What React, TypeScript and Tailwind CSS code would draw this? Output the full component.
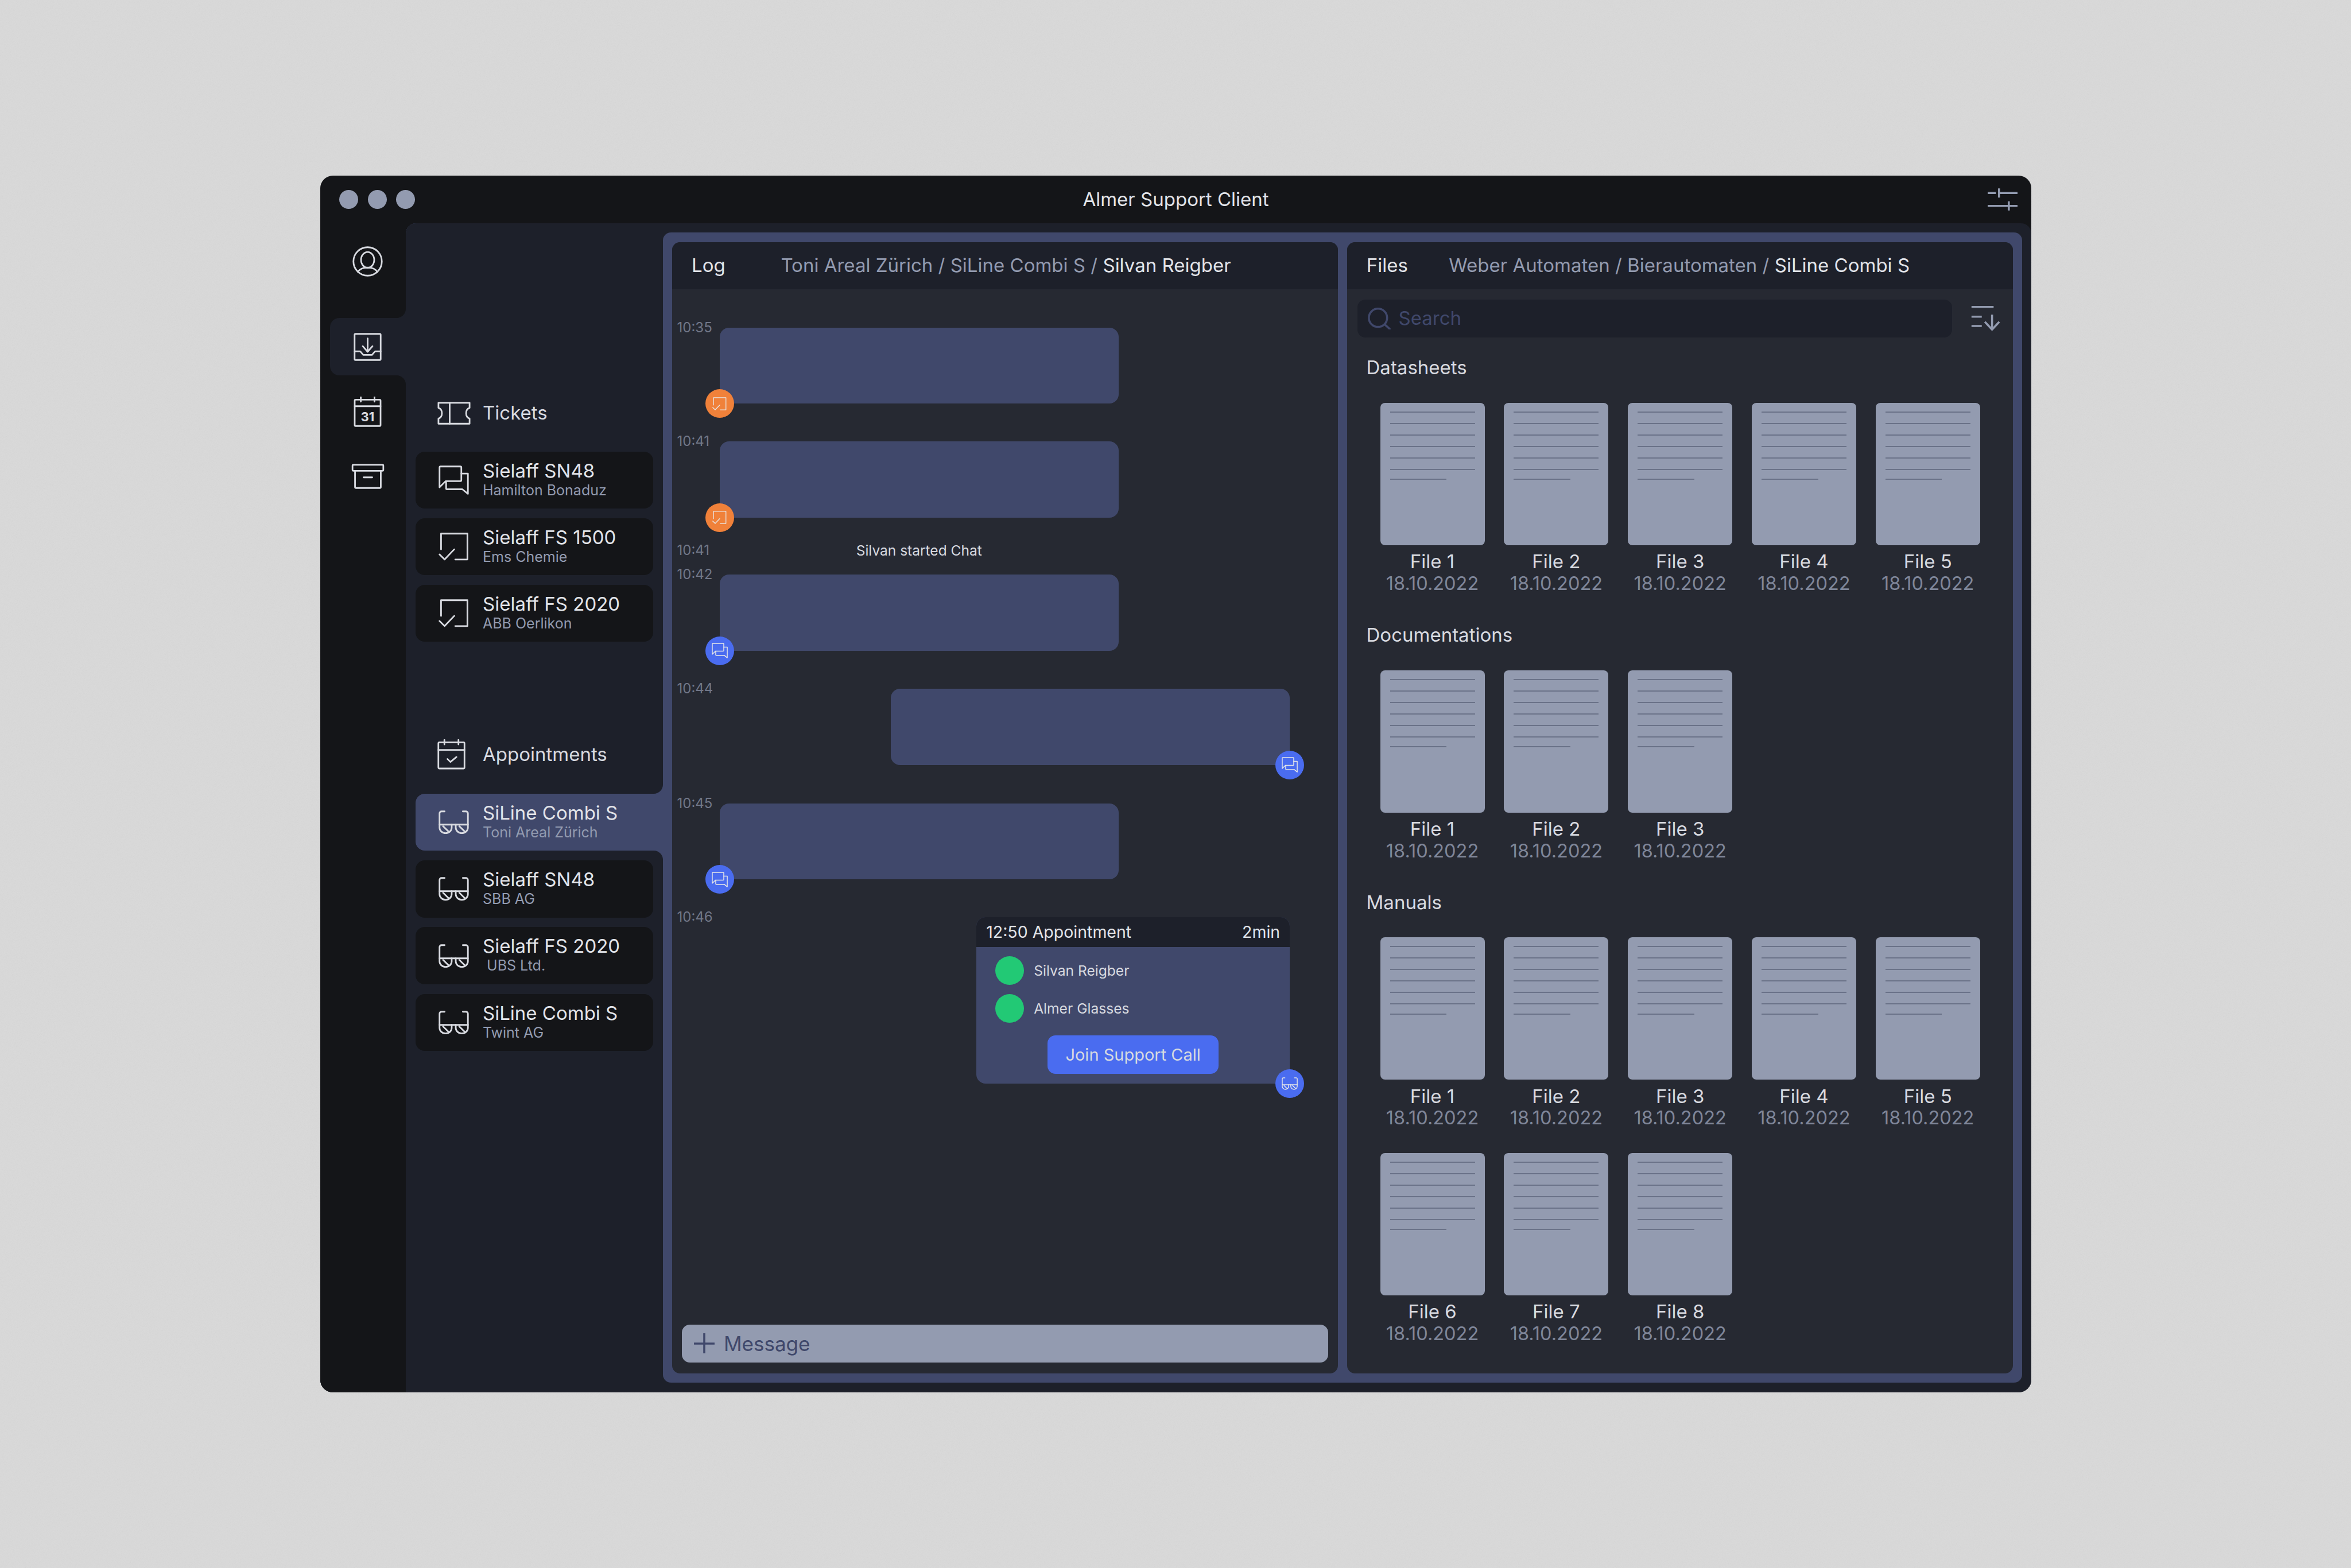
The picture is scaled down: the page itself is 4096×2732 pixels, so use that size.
const light = '#d8dae0'

const Svg = ({ w, h, vb, className = '', children }: { w: number; h: number; vb: string; className?: string; children: React.ReactNode }) => (
  <svg width={w} height={h} viewBox={vb} fill="none" stroke="currentColor" strokeWidth="3.2" strokeLinecap="round" strokeLinejoin="round" className={`block shrink-0 ${className}`} aria-hidden="true">
    {children}
  </svg>
)

const UserIcon = () => (
  <Svg w={53} h={53} vb="0 0 60 60">
    <circle cx="30" cy="30" r="28" />
    <ellipse cx="30" cy="27" rx="13" ry="15.5" />
    <path d="M11 51c3-6 10-9 19-9s16 3 19 9" />
  </Svg>
)

const InboxIcon = () => (
  <Svg w={49} h={49} vb="0 0 55 55">
    <rect x="2" y="2" width="51" height="51" rx="2" />
    <path d="M27.5 11v25M18 26l9.5 11L37 26" />
    <path d="M2 36h11l6 7h17l6-7h11" />
  </Svg>
)

const CalendarIcon = () => (
  <Svg w={49} h={53} vb="0 0 55 60">
    <rect x="2" y="6" width="51" height="52" rx="2" />
    <path d="M2 19h51M14 1v9M41 1v9" />
    <text x="27.5" y="49" textAnchor="middle" fontSize="25" fontWeight="700" fill="currentColor" stroke="none" fontFamily="Inter, sans-serif">31</text>
  </Svg>
)

const ArchiveIcon = () => (
  <Svg w={58} h={44} vb="0 0 65 50">
    <rect x="2" y="2" width="61" height="12" rx="2" />
    <path d="M7 14v32a2 2 0 002 2h47a2 2 0 002-2V14M24 27h17" />
  </Svg>
)

const TicketIcon = () => (
  <Svg w={58} h={40} vb="0 0 65 45">
    <path d="M2 2h61v10c-9 3-9 18 0 21v10H2V33c9-3 9-18 0-21z" />
    <path d="M24 2v41" />
  </Svg>
)

const CalendarCheckIcon = () => (
  <Svg w={49} h={53} vb="0 0 56 60">
    <rect x="2" y="6" width="52" height="52" rx="2" />
    <path d="M2 21h52M14 1v9M42 1v9M20 39l6 6 12-10" />
  </Svg>
)

const ChatIcon = ({ size = 53 }: { size?: number }) => (
  <Svg w={size} h={size * 58 / 60} vb="0 0 60 58">
    <path d="M2 43V4a2 2 0 012-2h39a2 2 0 012 2v25a2 2 0 01-2 2H14z" />
    <path d="M45 16h13v40L47 47H17a2 2 0 01-2-2V31" />
  </Svg>
)

const CheckIcon = ({ size = 53 }: { size?: number }) => (
  <Svg w={size} h={size * 56 / 60} vb="0 0 60 56">
    <path d="M5 33V2h52v51H33" />
    <path d="M2 43l10 10 19-20" />
  </Svg>
)

const GlassesIcon = ({ size = 53 }: { size?: number }) => (
  <Svg w={size} h={size * 47 / 60} vb="0 0 60 47">
    <path d="M12 2H6a4 4 0 00-4 4v22M48 2h6a4 4 0 014 4v22M2 28h56" />
    <path d="M2 28v6a12 11 0 0024 0v-6M34 28v6a12 11 0 0024 0v-6M9 31l11 11M41 31l11 11" />
  </Svg>
)

const SettingsIcon = () => (
  <svg width="52" height="39" viewBox="0 0 58 43" fill="none" stroke="#939bb0" strokeWidth="4" aria-hidden="true" className="block">
    <path d="M0 9h16M22 9h36M22 0v18M0 34h41M41 34h17M41 25v18" />
  </svg>
)

const SortIcon = () => (
  <svg width="52" height="43" viewBox="0 0 58 48" fill="none" stroke="#939bb0" strokeWidth="4" aria-hidden="true" className="block shrink-0">
    <path d="M2 2h43M2 21h20M2 39h20M42 17v29M28 31l14 15 14-15" />
  </svg>
)

const SearchIcon = () => (
  <svg width="40" height="38" viewBox="0 0 45 43" fill="none" stroke="#40486b" strokeWidth="4" strokeLinecap="round" aria-hidden="true" className="block shrink-0">
    <circle cx="20" cy="20" r="18" />
    <path d="M33 33l10 9" />
  </svg>
)

const PlusIcon = () => (
  <svg width="36" height="35" viewBox="0 0 40 39" fill="none" stroke="#40486b" strokeWidth="4" aria-hidden="true" className="block shrink-0">
    <path d="M0 20h40M20 0v39" />
  </svg>
)

const ListCard = ({ icon, title, sub, active = false }: { icon: React.ReactNode; title: string; sub: string; active?: boolean }) => (
  <div className={`flex h-[99.6px] items-start pl-[40px] ${active ? 'rounded-l-[16px] bg-[#40486b]' : 'rounded-[16px] bg-[#141518]'}`}>
    <div className="flex h-full w-[77.5px] shrink-0 items-center text-[#d8dae0]">{icon}</div>
    <div className="pt-[16px]">
      <div className="text-[33px] leading-[34px] text-[#e2e4e9]">{title}</div>
      <div className="mt-[4px] whitespace-pre text-[25px] leading-[26px] text-[#939bb0]">{sub}</div>
    </div>
  </div>
)

const Heading = ({ icon, label, className = '' }: { icon: React.ReactNode; label: string; className?: string }) => (
  <div className={`flex h-[60px] items-center pl-[38px] ${className}`}>
    <div className="flex w-[79.5px] shrink-0 items-center text-[#d8dae0]">{icon}</div>
    <span className="text-[33px] text-[#d8dae0]">{label}</span>
  </div>
)

const Badge = ({ color, side, children }: { color: string; side: 'left' | 'right'; children: React.ReactNode }) => (
  <div className={`absolute bottom-[-25px] flex h-[50px] w-[50px] items-center justify-center rounded-full text-[#e8e8e8] ${color === 'orange' ? 'bg-[#f0813a]' : 'bg-[#4a6cf0]'} ${side === 'left' ? 'left-[-25px]' : 'right-[-25px]'}`}>
    {children}
  </div>
)

const Time = ({ value }: { value: string }) => (
  <div className="w-[74px] shrink-0 text-[24px] leading-[0] text-[#717788]">{value}</div>
)

const Bubble = ({ side, badge }: { side: 'left' | 'right'; badge: React.ReactNode }) => (
  <div className={`relative h-[132.5px] w-[695.4px] rounded-[16px] bg-[#40486b] ${side === 'right' ? 'ml-auto' : ''}`}>
    {badge}
  </div>
)

const Row = ({ time, className = '', children }: { time: string; className?: string; children: React.ReactNode }) => (
  <div className={`flex ${className}`}>
    <Time value={time} />
    {children}
  </div>
)

const Participant = ({ name }: { name: string }) => (
  <div className="flex h-[50px] items-center gap-[17px]">
    <div className="h-[50px] w-[50px] rounded-full bg-[#22c975]" />
    <span className="text-[24.6px] text-[#d8dae0]">{name}</span>
  </div>
)

const LogPanel = () => (
  <section className="flex min-h-0 flex-col overflow-hidden rounded-[14px] bg-[#262932]">
    <header className="flex h-[82.7px] shrink-0 items-center bg-[#1d202a] pl-[34px] text-[33px]">
      <span className="w-[155.4px] text-[#e2e4e9]">Log</span>
      <span className="text-[#939bb0]">Toni Areal Zürich / SiLine Combi S / <span className="text-[#e2e4e9]">Silvan Reigber</span></span>
    </header>
    <div className="flex min-h-0 flex-1 flex-col pl-[8.5px] pr-[83.6px] pt-[66.7px]">
      <Row time="10:35">
        <Bubble side="left" badge={<Badge color="orange" side="left"><CheckIcon size={25} /></Badge>} />
      </Row>
      <Row time="10:41" className="mt-[65.8px]">
        <Bubble side="left" badge={<Badge color="orange" side="left"><CheckIcon size={25} /></Badge>} />
      </Row>
      <div className="mt-[41.8px] flex h-[32px] items-center">
        <Time value="10:41" />
        <div className="w-[695.4px] text-center text-[24.5px] text-[#d8dae0]">Silvan started Chat</div>
      </div>
      <Row time="10:42" className="mt-[25.8px]">
        <Bubble side="left" badge={<Badge color="blue" side="left"><ChatIcon size={28} /></Badge>} />
      </Row>
      <Row time="10:44" className="mt-[66.7px]">
        <Bubble side="right" badge={<Badge color="blue" side="right"><ChatIcon size={28} /></Badge>} />
      </Row>
      <Row time="10:45" className="mt-[66.7px]">
        <Bubble side="left" badge={<Badge color="blue" side="left"><ChatIcon size={28} /></Badge>} />
      </Row>
      <Row time="10:46" className="mt-[66.2px]">
        <div className="relative ml-auto h-[289.5px] w-[546px] rounded-[16px] bg-[#40486b]">
          <div className="flex h-[52px] items-center justify-between rounded-t-[16px] bg-[#1d202a] px-[17px] text-[28.5px] text-[#e2e4e9]">
            <span>12:50 Appointment</span>
            <span>2min</span>
          </div>
          <div className="flex flex-col gap-[16px] pl-[33px] pt-[16px]">
            <Participant name="Silvan Reigber" />
            <Participant name="Almer Glasses" />
          </div>
          <div className="mt-[22px] flex justify-center">
            <div className="flex h-[66.5px] w-[298px] items-center justify-center rounded-[14px] bg-[#4a6cf0] text-[29px] text-[#d8dae0]">Join Support Call</div>
          </div>
          <Badge color="blue" side="right"><GlassesIcon size={28} /></Badge>
        </div>
      </Row>
    </div>
    <div className="mx-[17px] mb-[18.7px] flex h-[66px] shrink-0 items-center gap-[16px] rounded-[14px] bg-[#939bb0] pl-[21px] text-[35px] text-[#40486b]">
      <PlusIcon />
      <span>Message</span>
    </div>
  </section>
)

const Thumb = ({ name }: { name: string }) => (
  <div className="w-[182px] text-center">
    <div className="flex h-[248px] flex-col gap-[18px] rounded-[8px] bg-[#939bb0] px-[17px] pt-[15px]">
      <div className="h-[2px] bg-[#6a7288]" />
      <div className="h-[2px] bg-[#6a7288]" />
      <div className="h-[2px] bg-[#6a7288]" />
      <div className="h-[2px] bg-[#6a7288]" />
      <div className="h-[2px] bg-[#6a7288]" />
      <div className="h-[2px] bg-[#6a7288]" />
      <div className="-mt-[2.5px] h-[2px] w-[98.7px] bg-[#6a7288]" />
    </div>
    <div className="mt-[10.4px] text-[33px] leading-[36px] text-[#d8dae0]">{name}</div>
    <div className="mt-[2.7px] text-[32.5px] leading-[36px] text-[#7f8699]">18.10.2022</div>
  </div>
)

const FileSection = ({ title, files, className = '' }: { title: string; files: string[]; className?: string }) => (
  <div className={className}>
    <h3 className="h-[40px] pl-[16px] text-[33px] font-normal leading-[40px] text-[#d8dae0]">{title}</h3>
    <div className="mt-[41.8px] grid grid-cols-[repeat(5,182px)] gap-x-[33.8px] gap-y-[42.3px] pl-[40px]">
      {files.map((file) => (
        <Thumb key={file} name={file} />
      ))}
    </div>
  </div>
)

const FilesPanel = () => (
  <section className="flex min-h-0 flex-col overflow-hidden rounded-[14px] bg-[#262932]">
    <header className="flex h-[82.7px] shrink-0 items-center bg-[#1d202a] pl-[34px] text-[33px]">
      <span className="w-[143.5px] text-[#e2e4e9]">Files</span>
      <span className="text-[#939bb0]">Weber Automaten / Bierautomaten / <span className="text-[#e2e4e9]">SiLine Combi S</span></span>
    </header>
    <div className="flex-1 px-[17.8px] pt-[17.8px]">
      <div className="flex items-center gap-[32px]">
        <div className="flex h-[66px] w-[1036px] items-center gap-[14px] rounded-[14px] bg-[#1d202a] pl-[18px] text-[33px] text-[#40486b]">
          <SearchIcon />
          <span>Search</span>
        </div>
        <SortIcon />
      </div>
      <FileSection className="mt-[32px]" title="Datasheets" files={['File 1', 'File 2', 'File 3', 'File 4', 'File 5']} />
      <FileSection className="mt-[50.9px]" title="Documentations" files={['File 1', 'File 2', 'File 3']} />
      <FileSection className="mt-[50.9px]" title="Manuals" files={['File 1', 'File 2', 'File 3', 'File 4', 'File 5', 'File 6', 'File 7', 'File 8']} />
    </div>
  </section>
)

const Rail = () => (
  <div className="flex w-[148.5px] shrink-0 flex-col bg-[#1d202a] text-[#d8dae0]">
    <div className="flex h-[165.4px] flex-col items-center rounded-br-[16px] bg-[#141518] pl-[17px] pt-[39.5px]">
      <UserIcon />
    </div>
    <div className="h-[99.6px] bg-[#141518] pl-[17px]">
      <div className="flex h-full items-center justify-center rounded-l-[16px] bg-[#1d202a]">
        <InboxIcon />
      </div>
    </div>
    <div className="flex flex-1 flex-col items-center gap-[64px] rounded-tr-[16px] bg-[#141518] pl-[17px] pt-[37.5px]">
      <CalendarIcon />
      <ArchiveIcon />
    </div>
  </div>
)

const Sidebar = () => (
  <div className="flex w-[448px] shrink-0 flex-col bg-[#40486b]">
    <div className="h-[993.8px] rounded-br-[16px] bg-[#1d202a] px-[17px] pt-[301px]">
      <Heading icon={<TicketIcon />} label="Tickets" />
      <div className="mt-[36.5px] flex flex-col gap-[16.5px]">
        <ListCard icon={<ChatIcon />} title="Sielaff SN48" sub="Hamilton Bonaduz" />
        <ListCard icon={<CheckIcon />} title="Sielaff FS 1500" sub="Ems Chemie" />
        <ListCard icon={<CheckIcon />} title="Sielaff FS 2020" sub="ABB Oerlikon" />
      </div>
      <Heading className="mt-[166.4px]" icon={<CalendarCheckIcon />} label="Appointments" />
    </div>
    <div className="bg-[#1d202a] pl-[17px]">
      <ListCard active icon={<GlassesIcon />} title="SiLine Combi S" sub="Toni Areal Zürich" />
    </div>
    <div className="flex flex-1 flex-col gap-[16.5px] rounded-tr-[16px] bg-[#1d202a] px-[17px] pt-[17px]">
      <ListCard icon={<GlassesIcon />} title="Sielaff SN48" sub="SBB AG" />
      <ListCard icon={<GlassesIcon />} title="Sielaff FS 2020" sub=" UBS Ltd." />
      <ListCard icon={<GlassesIcon />} title="SiLine Combi S" sub="Twint AG" />
    </div>
  </div>
)

export default function App() {
  return (
    <div className="relative h-[2732px] w-[4096px] overflow-hidden bg-[#d9d9d9] pl-[558px] pt-[306px] [font-family:Inter,sans-serif]">
      <svg className="absolute inset-0 h-full w-full opacity-[0.08]" aria-hidden="true">
        <filter id="grain">
          <feTurbulence type="fractalNoise" baseFrequency="0.7" numOctaves="2" stitchTiles="stitch" />
          <feColorMatrix type="saturate" values="0" />
        </filter>
        <rect width="100%" height="100%" filter="url(#grain)" />
      </svg>
      <div className="relative flex h-[2120px] w-[2981px] flex-col overflow-hidden rounded-[22px] bg-[#141518]">
        <div className="relative flex h-[83px] shrink-0 items-center justify-between pl-[33px] pr-[24px]">
          <div className="flex gap-[16.6px]">
            <div className="h-[33px] w-[33px] rounded-full bg-[#939bb0]" />
            <div className="h-[33px] w-[33px] rounded-full bg-[#939bb0]" />
            <div className="h-[33px] w-[33px] rounded-full bg-[#939bb0]" />
          </div>
          <div className="absolute inset-x-0 text-center text-[33px] text-[#e2e4e9]">Almer Support Client</div>
          <SettingsIcon />
        </div>
        <div className="flex min-h-0 flex-1">
          <Rail />
          <div className="flex min-w-0 flex-1 overflow-hidden rounded-tl-[18px] rounded-tr-[18px] bg-[#1d202a]">
            <Sidebar />
            <div className="min-w-0 flex-1 pb-[17px] pr-[16px] pt-[16px]">
              <div className="grid h-full grid-cols-2 gap-[16px] rounded-[14px] bg-[#40486b] p-[16.5px]">
                <LogPanel />
                <FilesPanel />
              </div>
            </div>
          </div>
        </div>
      </div>
    </div>
  )
}
